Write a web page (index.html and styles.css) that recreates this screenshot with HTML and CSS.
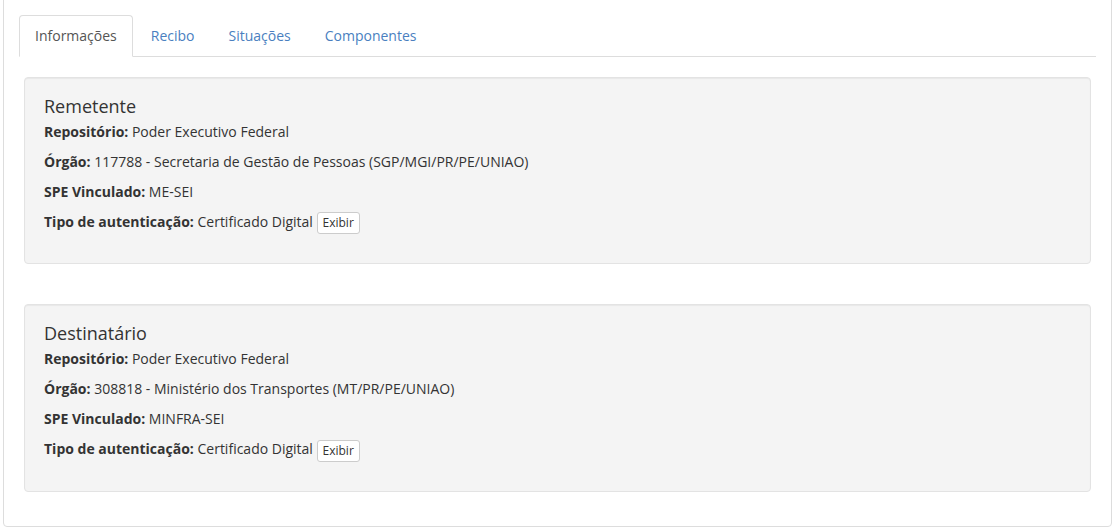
FILE: index.html
```html
<!DOCTYPE html>
<html lang="pt-BR">
<head>
<meta charset="utf-8">
<title>Processo</title>
<link rel="stylesheet" href="styles.css">
</head>
<body>
<div class="frame">
  <ul class="tabs">
    <li class="tab active"><a>Informações</a></li>
    <li class="tab"><a>Recibo</a></li>
    <li class="tab"><a>Situações</a></li>
    <li class="tab"><a>Componentes</a></li>
  </ul>
  <div class="tab-content">
    <div class="well">
      <h4 class="well-title">Remetente</h4>
      <p><b>Repositório:</b> Poder Executivo Federal</p>
      <p><b>Órgão:</b> 117788 - Secretaria de Gestão de Pessoas (SGP/MGI/PR/PE/UNIAO)</p>
      <p><b>SPE Vinculado:</b> ME-SEI</p>
      <p><b>Tipo de autenticação:</b> Certificado Digital <button class="btn-xs">Exibir</button></p>
    </div>
    <div class="well">
      <h4 class="well-title">Destinatário</h4>
      <p><b>Repositório:</b> Poder Executivo Federal</p>
      <p><b>Órgão:</b> 308818 - Ministério dos Transportes (MT/PR/PE/UNIAO)</p>
      <p><b>SPE Vinculado:</b> MINFRA-SEI</p>
      <p><b>Tipo de autenticação:</b> Certificado Digital <button class="btn-xs">Exibir</button></p>
    </div>
  </div>
</div>
</body>
</html>
```

FILE: styles.css
```css
html, body {
  margin: 0;
  padding: 0;
  background: #fff;
}
body {
  font-family: "Open Sans", "Liberation Sans", sans-serif;
  font-size: 14px;
  line-height: 20px;
  color: #333;
  overflow: hidden;
}
.frame {
  margin: -10px 6px 0 3px;
  padding: 24px 15px 34px 15px;
  border: 1px solid #ddd;
  border-radius: 0 0 4px 4px;
}
.tabs {
  list-style: none;
  margin: 0;
  padding: 0;
  display: flex;
  border-bottom: 1px solid #ddd;
}
.tab {
  margin-right: 2px;
  margin-bottom: -1px;
}
.tab a {
  display: block;
  padding: 10px 15px;
  line-height: 20px;
  color: #4a7fbf;
  border: 1px solid transparent;
  border-radius: 4px 4px 0 0;
}
.tab.active a {
  color: #555;
  background: #fff;
  border-color: #ddd #ddd transparent #ddd;
}
.tab-content {
  padding: 20px 5px 0 5px;
}
.well {
  background: #f4f4f4;
  border: 1px solid #e3e3e3;
  border-radius: 4px;
  box-shadow: inset 0 1px 1px rgba(0,0,0,0.05);
  padding: 18px 19px 19px;
  margin-bottom: 40px;
}
.well:last-child {
  margin-bottom: 0;
}
.well-title {
  margin: 0 0 6px;
  font-size: 18px;
  font-weight: 400;
  line-height: 20px;
  color: #333;
}
.well p {
  margin: 0 0 10px;
}
.well b {
  font-weight: 700;
}
.btn-xs {
  font-family: inherit;
  font-size: 12px;
  line-height: 18px;
  padding: 1px 5px;
  color: #333;
  background: #fff;
  border: 1px solid #ccc;
  border-radius: 3px;
  vertical-align: middle;
}
```
